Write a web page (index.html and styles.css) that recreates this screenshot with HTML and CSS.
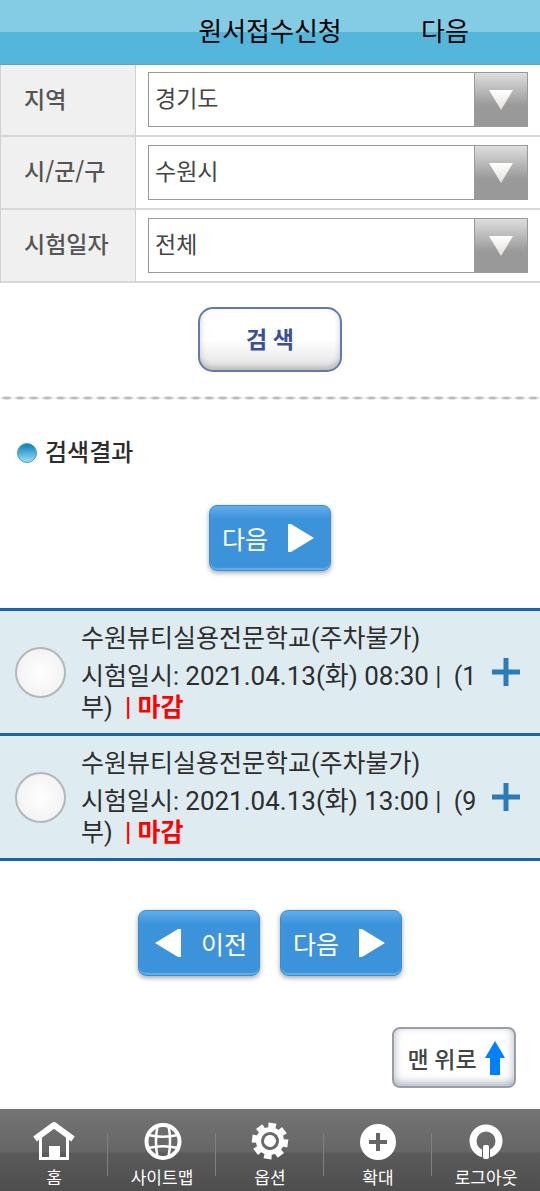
FILE: index.html
```html
<!DOCTYPE html>
<html lang="ko">
<head>
    <meta charset="UTF-8">
    <meta name="viewport" content="width=device-width, initial-scale=1.0">
    <title>원서접수신청</title>
    <link rel="stylesheet" href="styles.css">
</head>
<body>
    <header>
        <h1>원서접수신청</h1>
        <a href="#next">다음</a>
    </header>

    <main>
        <form>
            <table class="search-table">
                <tr>
                    <th scope="row"><label for="region">지역</label></th>
                    <td>
                        <div class="select-box">
                            <select id="region"><option>경기도</option></select>
                            <span class="select-arrow"><svg width="26" height="22" viewBox="0 0 26 22"><path d="M1 1H25L13 21Z" fill="url(#arrow)"/></svg></span>
                        </div>
                    </td>
                </tr>
                <tr>
                    <th scope="row"><label for="city">시/군/구</label></th>
                    <td>
                        <div class="select-box">
                            <select id="city"><option>수원시</option></select>
                            <span class="select-arrow"><svg width="26" height="22" viewBox="0 0 26 22"><path d="M1 1H25L13 21Z" fill="url(#arrow)"/></svg></span>
                        </div>
                    </td>
                </tr>
                <tr>
                    <th scope="row"><label for="examDate">시험일자</label></th>
                    <td>
                        <div class="select-box">
                            <select id="examDate"><option>전체</option></select>
                            <span class="select-arrow"><svg width="26" height="22" viewBox="0 0 26 22"><defs><linearGradient id="arrow" x1="0" y1="0" x2="0" y2="1"><stop offset="0" stop-color="#fff"/><stop offset="1" stop-color="#e4e0da"/></linearGradient></defs><path d="M1 1H25L13 21Z" fill="url(#arrow)"/></svg></span>
                        </div>
                    </td>
                </tr>
            </table>
            <div class="search-area">
                <button type="button" class="btn-search">검 색</button>
            </div>
        </form>

        <section class="result">
            <h2>검색결과</h2>
            <div class="btn-area">
                <button type="button" class="btn-blue btn-next">다음 <svg width="26" height="28" viewBox="0 0 26 28"><path d="M0 0H3L26 14L3 28H0Z" fill="#fff"/></svg></button>
            </div>

            <ul class="exam-list">
                <li>
                    <input type="radio" name="exam" id="exam1">
                    <label for="exam1">
                        <span class="place">수원뷰티실용전문학교(주차불가)</span>
                        <span class="info">시험일시: <time>2021.04.13(화) 08:30</time> |&nbsp; (1부)&nbsp; <strong>| 마감</strong></span>
                    </label>
                    <button type="button" class="btn-more" aria-label="상세보기"><svg width="28" height="28" viewBox="0 0 28 28"><path d="M14 0V28M0 14H28" stroke="#2b7bb9" stroke-width="5"/></svg></button>
                </li>
                <li>
                    <input type="radio" name="exam" id="exam2">
                    <label for="exam2">
                        <span class="place">수원뷰티실용전문학교(주차불가)</span>
                        <span class="info">시험일시: <time>2021.04.13(화) 13:00</time> |&nbsp; (9부)&nbsp; <strong>| 마감</strong></span>
                    </label>
                    <button type="button" class="btn-more" aria-label="상세보기"><svg width="28" height="28" viewBox="0 0 28 28"><path d="M14 0V28M0 14H28" stroke="#2b7bb9" stroke-width="5"/></svg></button>
                </li>
            </ul>

            <div class="btn-area paging" id="next">
                <button type="button" class="btn-blue btn-prev"><svg width="26" height="28" viewBox="0 0 26 28"><path d="M26 0H23L0 14L23 28H26Z" fill="#fff"/></svg> 이전</button>
                <button type="button" class="btn-blue btn-next">다음 <svg width="26" height="28" viewBox="0 0 26 28"><path d="M0 0H3L26 14L3 28H0Z" fill="#fff"/></svg></button>
            </div>
            <div class="top-area">
                <button type="button" class="btn-top">맨 위로 <svg width="20" height="34" viewBox="0 0 20 34"><path d="M10 0L20 17H15V34H5V17H0Z" fill="#007fff"/></svg></button>
            </div>
        </section>
    </main>

    <nav>
        <a href="#home">
            <svg width="42" height="38" viewBox="0 0 42 38"><path d="M2 17L21 3L40 17" fill="none" stroke="#fff" stroke-width="6"/><path d="M7.500 15V36.500H34.500V15" fill="none" stroke="#fff" stroke-width="3"/><path d="M16 24H27V37H16Z" fill="#fff"/></svg>
            홈
        </a>
        <a href="#sitemap">
            <svg width="42" height="38" viewBox="0 0 42 38" fill="none" stroke="#fff"><circle cx="22" cy="19.500" r="16.500" stroke-width="4"/><path d="M16.500 4C14.500 14 14.500 25 16.500 35M27.500 4C29.500 14 29.500 25 27.500 35M7 13C16 15 28 15 37 13M7 26C16 24 28 24 37 26" stroke-width="2.500"/></svg>
            사이트맵
        </a>
        <a href="#option">
            <svg width="42" height="38" viewBox="0 0 42 38"><g fill="#fff" transform="rotate(8 21 19)"><circle cx="21" cy="19" r="11.500" fill="none" stroke="#fff" stroke-width="5"/><circle cx="21" cy="19" r="6"/><path id="tooth" d="M17.500 7L17 1H25L24.500 7Z"/><use href="#tooth" transform="rotate(45 21 19)"/><use href="#tooth" transform="rotate(90 21 19)"/><use href="#tooth" transform="rotate(135 21 19)"/><use href="#tooth" transform="rotate(180 21 19)"/><use href="#tooth" transform="rotate(225 21 19)"/><use href="#tooth" transform="rotate(270 21 19)"/><use href="#tooth" transform="rotate(315 21 19)"/></g></svg>
            옵션
        </a>
        <a href="#zoom">
            <svg width="42" height="38" viewBox="0 0 42 38"><circle cx="21" cy="20" r="18" fill="#fff"/><path d="M21 11V29M12 20H30" stroke="#666" stroke-width="4"/></svg>
            확대
        </a>
        <a href="#logout">
            <svg width="42" height="38" viewBox="0 0 42 38"><circle cx="21" cy="19" r="13" fill="none" stroke="#fff" stroke-width="7"/><path d="M17 25H25V38H17Z" fill="#5f5f5f"/><rect x="18" y="23" width="6" height="14" rx="2" fill="#fff"/></svg>
            로그아웃
        </a>
    </nav>
</body>
</html>
```
FILE: styles.css
```css
* {
    box-sizing: border-box;
}
body {
    margin: 0;
    min-height: 100vh;
    display: flex;
    flex-direction: column;
    background-color: #fff;
    color: #2d2d2d;
    font-family: Roboto, "Noto Sans CJK KR", sans-serif;
}
main {
    flex-grow: 1;
}
h1, h2, ul {
    margin: 0;
    padding: 0;
}
button, select {
    font-family: inherit;
    cursor: pointer;
}
svg {
    display: block;
}

header {
    display: grid;
    grid-template-columns: 1fr 160px 1fr;
    align-items: center;
    text-align: center;
    height: 65px;
    border-bottom: 1px solid #5fa3bf;
    background: linear-gradient(#84cce4 50%, #53b6da 50%);
}
header h1, header a {
    font-size: 26px;
    font-weight: normal;
    line-height: 32px;
    color: #000;
    text-decoration: none;
}
header h1 {
    grid-column: 2;
}

.search-table {
    width: 100%;
    border-collapse: separate;
    border-spacing: 0;
    border-left: 1px solid #d0d0d0;
}
.search-table th, .search-table td {
    border-bottom: 2px solid #d8d8d8;
    padding: 8px 12px;
}
.search-table th {
    width: 135px;
    padding: 0 0 5px 23px;
    border-right: 1px solid #d0d0d0;
    background-color: #f0f0f0;
    color: #555;
    font-family: "Noto Sans CJK KR", sans-serif;
    font-size: 23px;
    font-weight: 500;
    text-align: left;
}
.search-table tr:first-child td {
    padding-top: 7px;
}
.select-box {
    position: relative;
}
select {
    display: block;
    width: 100%;
    height: 55px;
    padding: 0 60px 0 6px;
    border: 1px solid #999;
    border-radius: 0;
    background-color: #fff;
    color: #444;
    font-size: 23px;
    appearance: none;
}
.select-arrow {
    position: absolute;
    top: 0;
    right: 0;
    bottom: 0;
    width: 54px;
    display: flex;
    align-items: center;
    justify-content: center;
    border: 1px solid #999;
    background: linear-gradient(#dedede, #999 62%);
    pointer-events: none;
}

.search-area {
    display: flex;
    justify-content: center;
    padding: 24px 0;
}
.btn-search {
    width: 144px;
    height: 65px;
    padding: 0 0 4px;
    border: 2px solid #6678b0;
    border-radius: 15px;
    background: linear-gradient(#fff 50%, #e2e2e2);
    box-shadow: inset 0 -3px 6px rgba(0, 0, 0, 0.2);
    color: #3a4f9b;
    font-size: 23px;
    font-weight: bold;
}

.result {
    padding-top: 45px;
    background: radial-gradient(closest-side, #bbb 40%, transparent) 0 0 / 2.5% 4px repeat-x;
}
.result h2 {
    display: flex;
    align-items: center;
    gap: 8px;
    padding-left: 17px;
    font-size: 24px;
    font-weight: 500;
    line-height: 24px;
}
.result h2::before {
    content: "";
    width: 18px;
    height: 18px;
    border: 1px solid #3d9cc0;
    border-radius: 50%;
    background: linear-gradient(#0880b5, #9edcf8);
}

.btn-area {
    display: flex;
    justify-content: center;
    gap: 20px;
    padding: 40px 0 37px;
}
.paging {
    padding-top: 49px;
}
.btn-blue {
    display: flex;
    align-items: center;
    justify-content: center;
    gap: 20px;
    width: 122px;
    height: 66px;
    padding: 0;
    border: 1px solid #3a8ccf;
    border-radius: 8px;
    background: linear-gradient(#62aeec, #3d93da 20%);
    box-shadow: inset 0 -2px 1px #62aeec, 0 2px 5px rgba(0, 0, 0, 0.35);
    color: #fff;
    font-size: 25px;
}
.btn-prev {
    padding-left: 4px;
}
.btn-next {
    padding-right: 4px;
}

.exam-list {
    list-style: none;
    border-bottom: 3px solid #1a62ae;
}
.exam-list li {
    display: flex;
    align-items: center;
    padding: 10px 20px 10px 15px;
    border-top: 3px solid #1a62ae;
    background-color: #deecf2;
}
.exam-list input {
    appearance: none;
    flex: none;
    width: 51px;
    height: 51px;
    margin: 0;
    border: 2px solid #b0b8bb;
    border-radius: 50%;
    background: radial-gradient(#fff, #eee);
}
.exam-list label {
    flex: 1;
    padding: 2px 4px 0 15px;
    font-size: 25px;
    line-height: 31px;
}
.exam-list span {
    display: block;
}
.place {
    margin-bottom: 7px;
}
.info time {
    font-size: 26px;
}
.info strong {
    color: #f00;
}
.btn-more {
    flex: none;
    padding: 0;
    border: none;
    background: none;
}

.top-area {
    display: flex;
    justify-content: flex-end;
    padding: 14px 24px 21px;
}
.btn-top {
    display: flex;
    align-items: center;
    justify-content: center;
    gap: 8px;
    width: 124px;
    height: 61px;
    padding: 0 0 0 4px;
    border: 2px solid #9a9da3;
    border-radius: 8px;
    background-color: #fff;
    box-shadow: inset 0 -3px 8px rgba(90, 100, 125, 0.5);
    color: #444;
    font-size: 23px;
    font-weight: 500;
}

nav {
    display: flex;
    height: 82px;
    background: linear-gradient(#747474, #666 52%, #5a5a5a 54%, #4e4e4e);
}
nav a {
    flex: 1;
    display: flex;
    flex-direction: column;
    align-items: center;
    padding-top: 13px;
    gap: 8px;
    background: linear-gradient(#808080, #808080) right 24px / 1px 43px no-repeat;
    color: #fff;
    font-size: 17px;
    line-height: 20px;
    text-decoration: none;
}
nav a:last-child {
    background: none;
}
```
